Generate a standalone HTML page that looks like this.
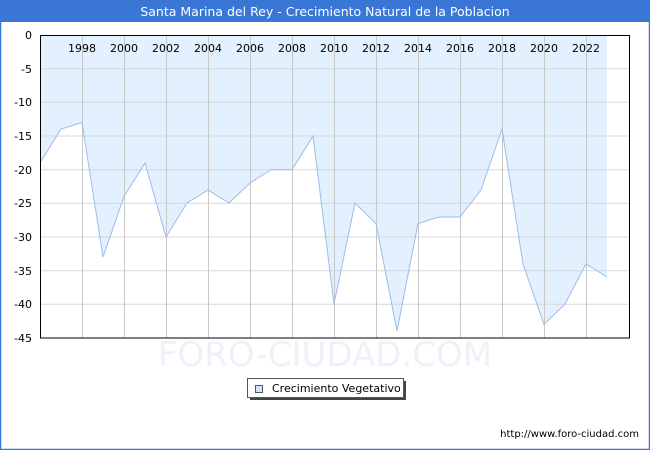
<!DOCTYPE html>
<html><head><style>
body{margin:0;width:650px;height:450px;overflow:hidden;font-family:"DejaVu Sans","Liberation Sans",sans-serif;}
</style></head><body>
<svg width="650" height="450" xmlns="http://www.w3.org/2000/svg" font-family="DejaVu Sans, Liberation Sans, sans-serif">
<rect x="0" y="0" width="650" height="450" fill="#fff"/>
<rect x="0.5" y="0.5" width="649" height="449" fill="none" stroke="#3a76d6" stroke-width="1.5"/>
<rect x="0" y="0" width="650" height="22" fill="#3a76d6"/>
<text x="325" y="16" font-size="12.5" fill="#fff" text-anchor="middle">Santa Marina del Rey - Crecimiento Natural de la Poblacion</text>
<polygon fill="#e3f0fe" points="40,35 40,163 61,129 82,122.5 103,257 124,196.6 145,163 166,237 187,203 208,190 229,203 250,183 271,169.7 292,169.7 313,136 334,304 355,203 376,223.5 397,331 418,223.5 439,217 460,217 481,190 502,129 523,264 544,324.5 565,304 586,264 607,277 607,35"/>
<g stroke="#d8d8d8" stroke-width="1">
<line x1="40" x2="630" y1="68.7" y2="68.7"/><line x1="40" x2="630" y1="102.3" y2="102.3"/><line x1="40" x2="630" y1="136" y2="136"/><line x1="40" x2="630" y1="169.7" y2="169.7"/><line x1="40" x2="630" y1="203.3" y2="203.3"/><line x1="40" x2="630" y1="237" y2="237"/><line x1="40" x2="630" y1="270.7" y2="270.7"/><line x1="40" x2="630" y1="304.3" y2="304.3"/>
</g>
<g stroke="#c8c8c8" stroke-width="1">
<line x1="82.5" x2="82.5" y1="35" y2="338"/><line x1="124.5" x2="124.5" y1="35" y2="338"/><line x1="166.5" x2="166.5" y1="35" y2="338"/><line x1="208.5" x2="208.5" y1="35" y2="338"/><line x1="250.5" x2="250.5" y1="35" y2="338"/><line x1="292.5" x2="292.5" y1="35" y2="338"/><line x1="334.5" x2="334.5" y1="35" y2="338"/><line x1="376.5" x2="376.5" y1="35" y2="338"/><line x1="418.5" x2="418.5" y1="35" y2="338"/><line x1="460.5" x2="460.5" y1="35" y2="338"/><line x1="502.5" x2="502.5" y1="35" y2="338"/><line x1="544.5" x2="544.5" y1="35" y2="338"/><line x1="586.5" x2="586.5" y1="35" y2="338"/>
</g>
<polyline fill="none" stroke="#9dbcec" stroke-width="1" points="40,163 61,129 82,122.5 103,257 124,196.6 145,163 166,237 187,203 208,190 229,203 250,183 271,169.7 292,169.7 313,136 334,304 355,203 376,223.5 397,331 418,223.5 439,217 460,217 481,190 502,129 523,264 544,324.5 565,304 586,264 607,277"/>
<rect x="40.5" y="35.5" width="589" height="302.5" fill="none" stroke="#000" stroke-width="1"/>
<text x="325" y="366" font-size="34" fill="#f0f0fa" text-anchor="middle">FORO-CIUDAD.COM</text>
<g font-size="11" fill="#000" text-anchor="end">
<text x="32" y="39">0</text><text x="32" y="73">-5</text><text x="32" y="106">-10</text><text x="32" y="140">-15</text><text x="32" y="174">-20</text><text x="32" y="207">-25</text><text x="32" y="241">-30</text><text x="32" y="275">-35</text><text x="32" y="308">-40</text><text x="32" y="342">-45</text>
</g>
<g font-size="11" fill="#000" text-anchor="middle">
<text x="82" y="52">1998</text><text x="124" y="52">2000</text><text x="166" y="52">2002</text><text x="208" y="52">2004</text><text x="250" y="52">2006</text><text x="292" y="52">2008</text><text x="334" y="52">2010</text><text x="376" y="52">2012</text><text x="418" y="52">2014</text><text x="460" y="52">2016</text><text x="502" y="52">2018</text><text x="544" y="52">2020</text><text x="586" y="52">2022</text>
</g>
<rect x="250" y="381" width="156" height="19" fill="#444"/>
<rect x="247.5" y="378.5" width="156" height="19" fill="#fff" stroke="#555"/>
<rect x="255.5" y="385.5" width="7" height="7" fill="#cfe4fb" stroke="#555"/>
<text x="272" y="392" font-size="11" fill="#000">Crecimiento Vegetativo</text>
<text x="639" y="437" font-size="10" fill="#000" text-anchor="end">http://www.foro-ciudad.com</text>
</svg>
</body></html>
